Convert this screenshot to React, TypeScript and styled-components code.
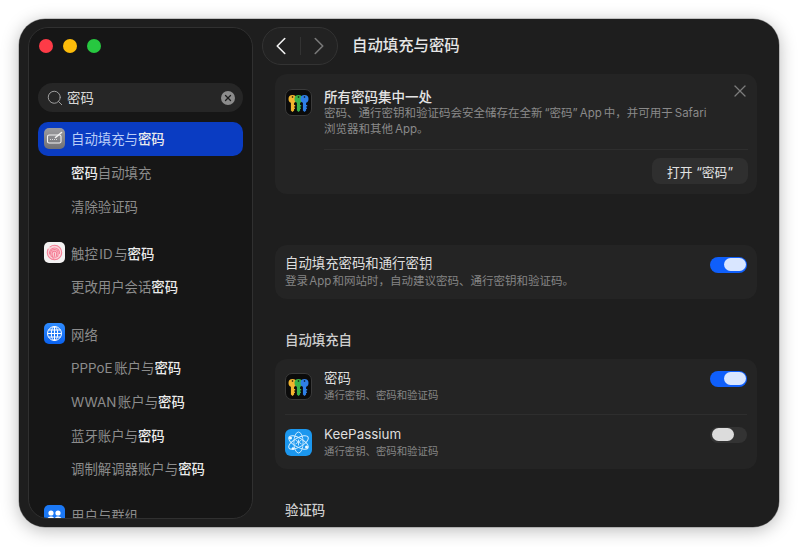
import styled, { createGlobalStyle } from "styled-components";
import { Search, X, ChevronLeft, ChevronRight } from "lucide-react";

const GlobalStyle = createGlobalStyle`
  html, body {
    margin: 0;
    height: 100%;
    background: #fff;
  }
  body {
    font-family: Inter, "Noto Sans CJK SC", sans-serif;
    -webkit-font-smoothing: antialiased;
  }
`;

const Page = styled.div`
  height: 547px;
  padding: 19px;
  box-sizing: border-box;
  overflow: hidden;
`;
const Window = styled.div`
  height: 508px;
  display: flex;
  padding: 8px 0 8px 9px;
  box-sizing: border-box;
  background: #1e1e1e;
  border-radius: 26px;
  box-shadow: 0 0 0 0.5px rgba(0, 0, 0, 0.35), 0 3px 18px rgba(0, 0, 0, 0.28);
  overflow: hidden;
  color: #e4e4e4;
`;

const Sidebar = styled.aside`
  width: 225px;
  flex: none;
  box-sizing: border-box;
  padding: 11px 9px 0;
  background: #161616;
  border: 1px solid #303030;
  border-radius: 20px;
  overflow: hidden;
`;
const Lights = styled.div`
  display: flex;
  gap: 10px;
  padding-left: 1px;
`;
const Light = styled.span<{ $color: string }>`
  width: 14px;
  height: 14px;
  border-radius: 50%;
  background: ${(props) => props.$color};
`;
const SearchBox = styled.div`
  margin-top: 30px;
  height: 29px;
  display: flex;
  align-items: center;
  gap: 3.5px;
  padding: 0 8px 0 7.5px;
  border-radius: 15px;
  background: #262626;
  font-size: 13.4px;
  color: #d8d8d8;
  svg {
    color: #a0a0a0;
    flex: none;
  }
  span {
    flex: 1;
    margin-top: -1px;
  }
`;
const ClearButton = styled.i`
  width: 14px;
  height: 14px;
  border-radius: 50%;
  background: #8c8c8c;
  display: flex;
  align-items: center;
  justify-content: center;
  svg {
    color: #1e1e1e;
  }
`;
const NavList = styled.nav`
  margin-top: 10px;
`;
const NavGroup = styled.div`
  & + & {
    margin-top: 13.4px;
  }
`;
const NavRow = styled.div<{ $active?: boolean; $sub?: boolean }>`
  height: 33.7px;
  box-sizing: border-box;
  display: flex;
  align-items: center;
  gap: 6px;
  padding-left: ${(props) => (props.$sub ? "33px" : "6px")};
  padding-bottom: 1px;
  border-radius: 10px;
  font-size: 13.4px;
  word-spacing: -2.2px;
  white-space: nowrap;
  color: ${(props) => (props.$active ? "#b9cdf7" : "#8c8c8c")};
  background: ${(props) => (props.$active ? "#0a3cc2" : "transparent")};
  b {
    font-weight: 500;
    color: #ececec;
  }
`;
const RowIcon = styled.svg<{ $size?: number }>`
  width: ${(props) => props.$size ?? 21}px;
  height: ${(props) => props.$size ?? 21}px;
  flex: none;
`;

const Main = styled.main`
  flex: 1;
  min-width: 0;
`;
const Toolbar = styled.header`
  display: flex;
  align-items: center;
  gap: 14px;
  padding-left: 9px;
  height: 38px;
`;
const NavPill = styled.div`
  width: 76px;
  height: 38px;
  box-sizing: border-box;
  display: flex;
  align-items: center;
  justify-content: space-between;
  padding: 0 3px;
  border: 1px solid #333;
  border-radius: 19px;
  background: #222;
  position: relative;
  &::after {
    content: "";
    position: absolute;
    left: 37px;
    top: 9px;
    bottom: 9px;
    width: 1px;
    background: #333;
  }
`;
const PageTitle = styled.h1`
  margin: 0;
  font-size: 15.4px;
  line-height: 20px;
  font-weight: 500;
  color: #e6e6e6;
`;
const Content = styled.div`
  padding: 9px 22px 0;
`;
const Card = styled.section<{ $gap?: number }>`
  background: #242424;
  border-radius: 12px;
  margin-top: ${(props) => props.$gap ?? 0}px;
`;
const PromoTop = styled.div`
  position: relative;
  display: flex;
  gap: 12px;
  padding: 15px 10px 0;
`;
const PromoTitle = styled.div`
  font-size: 13.5px;
  line-height: 17px;
  font-weight: 500;
  color: #e4e4e4;
`;
const PromoText = styled.p`
  margin: 0;
  width: 390px;
  font-size: 11.5px;
  line-height: 15.5px;
  word-spacing: -1.2px;
  color: #8a8a8a;
`;
const CloseButton = styled.span`
  position: absolute;
  top: 7px;
  right: 7px;
  display: flex;
  color: #7c7c7c;
`;
const PromoFoot = styled.div`
  margin: 12px 9px 0 49px;
  padding: 8px 0 10px;
  border-top: 1px solid #2e2e2e;
  display: flex;
  justify-content: flex-end;
`;
const OpenButton = styled.button`
  width: 96px;
  height: 26px;
  padding: 0;
  border: 0;
  border-radius: 8px;
  background: #2f2f2f;
  color: #e2e2e2;
  font: inherit;
  font-size: 12.8px;
`;
const SettingRow = styled.div<{ $height: number }>`
  height: ${(props) => props.$height}px;
  display: flex;
  align-items: center;
  gap: 12px;
  padding: 0 10px;
`;
const SettingText = styled.div`
  flex: 1;
  min-width: 0;
`;
const SettingTitle = styled.div`
  font-size: 13.4px;
  line-height: 17px;
  color: #dedede;
`;
const SettingHint = styled.div<{ $small?: boolean }>`
  margin-top: 1px;
  font-size: ${(props) => (props.$small ? "10.4px" : "11.5px")};
  line-height: ${(props) => (props.$small ? "15px" : "17px")};
  word-spacing: -2px;
  color: #858585;
`;
const Toggle = styled.span<{ $on?: boolean }>`
  width: 37px;
  height: 16px;
  flex: none;
  align-self: flex-start;
  margin-top: 11.5px;
  box-sizing: border-box;
  display: flex;
  justify-content: ${(props) => (props.$on ? "flex-end" : "flex-start")};
  align-items: center;
  padding: 0 1.5px;
  border-radius: 8px;
  background: ${(props) => (props.$on ? "#0f5ffb" : "#333")};
  &::after {
    content: "";
    width: 22px;
    height: 13px;
    border-radius: 7px;
    background: ${(props) => (props.$on ? "#d9e6ff" : "#dcdcdc")};
  }
`;
const RowDivider = styled.div`
  height: 1px;
  margin: 0 10px;
  background: #2e2e2e;
`;
const SectionHeading = styled.h2`
  margin: 32px 0 10px 10px;
  font-size: 13.4px;
  line-height: 18px;
  font-weight: 500;
  color: #cfcfcf;
`;

function Highlight({ label }: { label: string }) {
  const parts = label.split("密码");
  return (
    <span>
      {parts.map((part, index) => (
        <span key={index}>
          {part}
          {index < parts.length - 1 && <b>密码</b>}
        </span>
      ))}
    </span>
  );
}

function SettingsIcon() {
  return (
    <RowIcon viewBox="0 0 21 21">
      <defs>
        <linearGradient id="grey" x1="0" y1="0" x2="0" y2="1">
          <stop offset="0" stopColor="#9c9c9f" />
          <stop offset="1" stopColor="#717175" />
        </linearGradient>
      </defs>
      <rect width="21" height="21" rx="5" fill="url(#grey)" />
      <rect x="3.5" y="7" width="13.5" height="8" rx="1.6" fill="none" stroke="#f2f2f2" strokeWidth="1.1" />
      <path d="M6 11.5h.8M8 11.5h.8M10 11.5h.8M12 11.5h.8" stroke="#f2f2f2" strokeWidth="1.1" />
      <path d="M11.5 9.5 17.5 4.5" stroke="#f2f2f2" strokeWidth="1.6" strokeLinecap="round" />
    </RowIcon>
  );
}

function TouchIdIcon() {
  return (
    <RowIcon viewBox="0 0 21 21">
      <rect width="21" height="21" rx="5" fill="#f4f2f2" />
      <circle cx="10.5" cy="10.5" r="7.6" fill="#fbd3da" />
      <g fill="none" stroke="#f57f96" strokeWidth="1.05" strokeLinecap="round">
        <circle cx="10.5" cy="10.5" r="7.2" strokeDasharray="26 3" />
        <path d="M5.5 12c-.4-3.4 1.800-6 5-6s5.300 2.400 5 5.500" />
        <path d="M7.400 14.500c-.7-1.500-.9-2.700-.8-3.700.2-2.200 1.900-3.400 3.900-3.400s3.700 1.500 3.600 3.800c0 1.100-.1 2.200-.5 3.300" />
        <path d="M9 16c-.6-1.500-1-3.200-.9-4.800.1-1.300 1-2.100 2.400-2.100s2.300 1 2.200 2.400c-.1 1.500-.3 3-.9 4.300" />
        <path d="M10.500 11c0 2-.2 3.700-.6 5.400" />
      </g>
    </RowIcon>
  );
}

function NetworkIcon() {
  return (
    <RowIcon viewBox="0 0 21 21">
      <defs>
        <linearGradient id="blue" x1="0" y1="0" x2="0" y2="1">
          <stop offset="0" stopColor="#2f8cff" />
          <stop offset="1" stopColor="#0a62f0" />
        </linearGradient>
      </defs>
      <rect width="21" height="21" rx="5" fill="url(#blue)" />
      <g fill="none" stroke="#fff" strokeWidth="1">
        <circle cx="10.500" cy="10.500" r="7" />
        <ellipse cx="10.500" cy="10.500" rx="3.200" ry="7" />
        <path d="M10.500 3.500v14M3.500 10.500h14M4.500 7h12M4.500 14h12" />
      </g>
    </RowIcon>
  );
}

function UsersIcon() {
  return (
    <RowIcon viewBox="0 0 21 21">
      <rect width="21" height="21" rx="5" fill="#1b78f5" />
      <g fill="#fff">
        <circle cx="7" cy="8" r="2.600" />
        <circle cx="14" cy="8" r="2.600" />
        <path d="M2.800 16c0-3 1.800-4.500 4.200-4.500s3 1 3 2.500v2zM18.200 16c0-3-1.800-4.500-4.200-4.500s-3 1-3 2.500v2z" />
      </g>
    </RowIcon>
  );
}

function KeysIcon() {
  const key = (x: number, color: string) => (
    <g>
      <circle cx={x} cy="10" r="4" fill={color} />
      <path d={`M${x - 1.6} 13h3.200v3h1.100v1.600h-1.100v1h.8v1.500h-.8v1.300l-1.600 1.500-1.600-1.500z`} fill={color} />
      <circle cx={x} cy="8" r=".8" fill="#0b0b0b" />
    </g>
  );
  return (
    <RowIcon $size={27} viewBox="0 0 27 27">
      <rect x=".5" y=".5" width="26" height="26" rx="6.500" fill="#0b0b0b" stroke="#3a3a3a" />
      {key(7.500, "#f2b52e")}
      {key(13.500, "#37b24a")}
      {key(19.500, "#2f7fe6")}
    </RowIcon>
  );
}

function AtomIcon() {
  return (
    <RowIcon $size={27} viewBox="0 0 27 27">
      <rect width="27" height="27" rx="6" fill="#1c97ee" />
      <g fill="none" stroke="#d5eeff" strokeWidth=".9">
        <ellipse cx="13.500" cy="13.500" rx="11" ry="4.600" transform="rotate(30 13.500 13.500)" />
        <ellipse cx="13.500" cy="13.500" rx="11" ry="4.600" transform="rotate(-30 13.500 13.500)" />
        <ellipse cx="13.500" cy="13.500" rx="4.600" ry="10.500" />
        <path d="M10.500 11l3 2-3 2M13.500 10.500v6M16.500 11l-3 2 3 2" />
      </g>
      <g fill="#f2faff">
        <circle cx="5.500" cy="9" r="1.500" />
        <circle cx="21.500" cy="18" r="1.500" />
        <circle cx="8" cy="19.500" r="1.300" />
      </g>
    </RowIcon>
  );
}

const traffic = ["#fe3b47", "#fdbc0a", "#27c840"];

const groups = [
  { icon: <SettingsIcon />, label: "自动填充与密码", active: true, subs: ["密码自动填充", "清除验证码"] },
  { icon: <TouchIdIcon />, label: "触控 ID 与密码", subs: ["更改用户会话密码"] },
  { icon: <NetworkIcon />, label: "网络", subs: ["PPPoE 账户与密码", "WWAN 账户与密码", "蓝牙账户与密码", "调制解调器账户与密码"] },
  { icon: <UsersIcon />, label: "用户与群组", subs: [] },
];

function App() {
  return (
    <Page>
      <GlobalStyle />
      <Window>
        <Sidebar>
          <Lights>
            {traffic.map((color) => (
              <Light key={color} $color={color} />
            ))}
          </Lights>
          <SearchBox>
            <Search size={18} strokeWidth={1.3} />
            <span>密码</span>
            <ClearButton>
              <X size={10} strokeWidth={3} />
            </ClearButton>
          </SearchBox>
          <NavList>
            {groups.map((group) => (
              <NavGroup key={group.label}>
                <NavRow $active={group.active}>
                  {group.icon}
                  <Highlight label={group.label} />
                </NavRow>
                {group.subs.map((sub) => (
                  <NavRow key={sub} $sub>
                    <Highlight label={sub} />
                  </NavRow>
                ))}
              </NavGroup>
            ))}
          </NavList>
        </Sidebar>
        <Main>
          <Toolbar>
            <NavPill>
              <ChevronLeft size={30} strokeWidth={1.3} color="#f0f0f0" />
              <ChevronRight size={30} strokeWidth={1.3} color="#777" />
            </NavPill>
            <PageTitle>自动填充与密码</PageTitle>
          </Toolbar>
          <Content>
            <Card>
              <PromoTop>
                <KeysIcon />
                <div>
                  <PromoTitle>所有密码集中一处</PromoTitle>
                  <PromoText>
                    密码、通行密钥和验证码会安全储存在全新 “密码” App 中，并可用于 Safari 浏览器和其他 App。
                  </PromoText>
                </div>
                <CloseButton>
                  <X size={20} strokeWidth={1.5} />
                </CloseButton>
              </PromoTop>
              <PromoFoot>
                <OpenButton>打开 “密码”</OpenButton>
              </PromoFoot>
            </Card>
            <Card $gap={51}>
              <SettingRow $height={54}>
                <SettingText>
                  <SettingTitle>自动填充密码和通行密钥</SettingTitle>
                  <SettingHint>登录 App 和网站时，自动建议密码、通行密钥和验证码。</SettingHint>
                </SettingText>
                <Toggle $on />
              </SettingRow>
            </Card>
            <SectionHeading>自动填充自</SectionHeading>
            <Card>
              <SettingRow $height={55}>
                <KeysIcon />
                <SettingText>
                  <SettingTitle>密码</SettingTitle>
                  <SettingHint $small>通行密钥、密码和验证码</SettingHint>
                </SettingText>
                <Toggle $on />
              </SettingRow>
              <RowDivider />
              <SettingRow $height={54}>
                <AtomIcon />
                <SettingText>
                  <SettingTitle>KeePassium</SettingTitle>
                  <SettingHint $small>通行密钥、密码和验证码</SettingHint>
                </SettingText>
                <Toggle />
              </SettingRow>
            </Card>
            <SectionHeading>验证码</SectionHeading>
          </Content>
        </Main>
      </Window>
    </Page>
  );
}

export default App;
